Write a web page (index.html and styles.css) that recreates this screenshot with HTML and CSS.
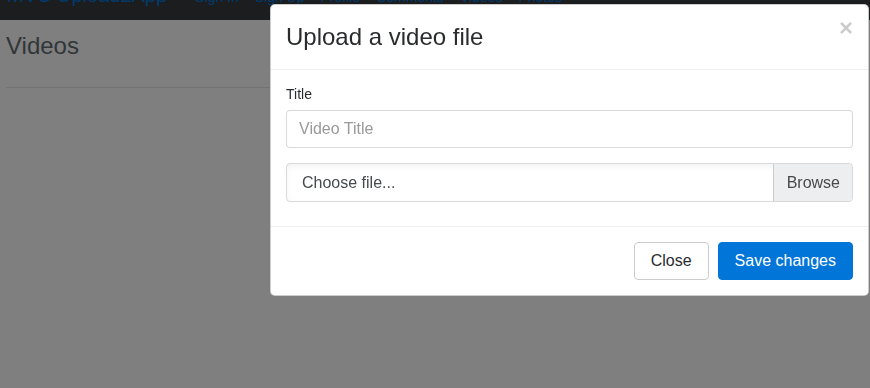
FILE: index.html
```html
<!DOCTYPE html>
<html lang="en">
<head>
  <meta charset="UTF-8">
  <title>Videos - MVC Upload2App</title>
  <link rel="stylesheet" href="styles.css">
</head>
<body>

  <nav class="navbar">
    <a class="brand" href="#">MVC Upload2App</a>
    <a class="nav-link" href="#">Sign In</a>
    <a class="nav-link" href="#">Sign Up</a>
    <a class="nav-link" href="#">Profile</a>
    <a class="nav-link" href="#">Comments</a>
    <a class="nav-link" href="#">Videos</a>
    <a class="nav-link" href="#">Photos</a>
  </nav>

  <main class="page">
    <h1 class="page-title">Videos</h1>
    <hr class="divider">
  </main>

  <div class="backdrop"></div>

  <div class="modal">
    <div class="modal-header">
      <h4 class="modal-title">Upload a video file</h4>
      <button type="button" class="close">&times;</button>
    </div>

    <form id="uploadForm">
      <div class="modal-body">
        <div class="form-group">
          <label for="title">Title</label>
          <input type="text" id="title" name="title" class="form-control" placeholder="Video Title">
        </div>
        <div class="form-group">
          <label class="custom-file">
            <input type="file" id="file" name="file" class="file-input">
            <span class="file-text">Choose file...</span>
            <span class="file-browse">Browse</span>
          </label>
        </div>
      </div>

      <div class="modal-footer">
        <button type="button" class="btn btn-secondary">Close</button>
        <button type="submit" class="btn btn-primary">Save changes</button>
      </div>
    </form>
  </div>

</body>
</html>
```

FILE: styles.css
```css
* {
  box-sizing: border-box;
}
body {
  margin: 0;
  font-family: "Liberation Sans", Arial, sans-serif;
  font-size: 16px;
  color: #292b2c;
  background: #fff;
  overflow: hidden;
}

/* navbar, scrolled mostly out of view */
.navbar {
  display: flex;
  align-items: baseline;
  height: 50px;
  margin-top: -30px;
  padding: 10px 7px 0;
  background: #393b3e;
}
.brand {
  font-size: 20px;
  line-height: 30px;
  color: #0275d8;
  text-decoration: none;
  margin-right: 20px;
}
.nav-link {
  font-size: 14px;
  color: #0275d8;
  text-decoration: none;
  padding: 0 8px;
}

.page {
  padding: 0 6px;
}
.page-title {
  margin: 13px 0 0;
  font-size: 24px;
  line-height: 26px;
  font-weight: normal;
  color: #636c72;
}
.divider {
  margin: 28px 0 0;
  border: 0;
  border-top: 1px solid rgba(0, 0, 0, .1);
}

.backdrop {
  position: fixed;
  top: 0;
  left: 0;
  right: 0;
  bottom: 0;
  background: rgba(0, 0, 0, .5);
}

/* modal */
.modal {
  position: absolute;
  top: 4px;
  left: 270px;
  width: 599px;
  background: #fff;
  border: 1px solid rgba(0, 0, 0, .2);
  border-radius: 5px;
}
.modal-header {
  display: flex;
  justify-content: space-between;
  align-items: flex-start;
  padding: 14px 15px;
  border-bottom: 1px solid #eceeef;
}
.modal-title {
  margin: 0;
  font-size: 24px;
  line-height: 36px;
  font-weight: normal;
  color: #292b2c;
}
.close {
  padding: 0;
  margin-top: -3px;
  border: 0;
  background: none;
  font-family: inherit;
  font-size: 24px;
  font-weight: bold;
  line-height: 1;
  color: #000;
  opacity: .2;
}

.modal-body {
  padding: 16px 15px 9px;
}
.form-group {
  margin-bottom: 15px;
}
label {
  display: block;
  font-size: 14px;
  line-height: 17px;
  margin-bottom: 7px;
}
.form-control {
  display: block;
  width: 100%;
  height: 38px;
  padding: 8px 12px;
  font-family: inherit;
  font-size: 16px;
  color: #464a4c;
  border: 1px solid rgba(0, 0, 0, .15);
  border-radius: 4px;
}
.form-control::placeholder {
  color: #999;
}

.custom-file {
  position: relative;
  display: flex;
  height: 39px;
  margin: 0;
  font-size: 16px;
  line-height: 24px;
  color: #464a4c;
  border: 1px solid rgba(0, 0, 0, .15);
  border-radius: 4px;
  box-shadow: inset 0 3px 6px rgba(0, 0, 0, .05);
  overflow: hidden;
}
.file-input {
  display: none;
}
.file-text {
  flex: 1;
  padding: 7px 15px;
}
.file-browse {
  padding: 7px 12px 7px 13px;
  background: #eceeef;
  border-left: 1px solid rgba(0, 0, 0, .15);
}

.modal-footer {
  display: flex;
  justify-content: flex-end;
  gap: 9px;
  padding: 15px;
  border-top: 1px solid #eceeef;
}
.btn {
  height: 38px;
  padding: 0 16px;
  font-family: inherit;
  font-size: 16px;
  border: 1px solid transparent;
  border-radius: 4px;
}
.btn-secondary {
  background: #fff;
  color: #292b2c;
  border-color: #ccc;
}
.btn-primary {
  background: #0275d8;
  color: #fff;
  border-color: #0275d8;
}
```
